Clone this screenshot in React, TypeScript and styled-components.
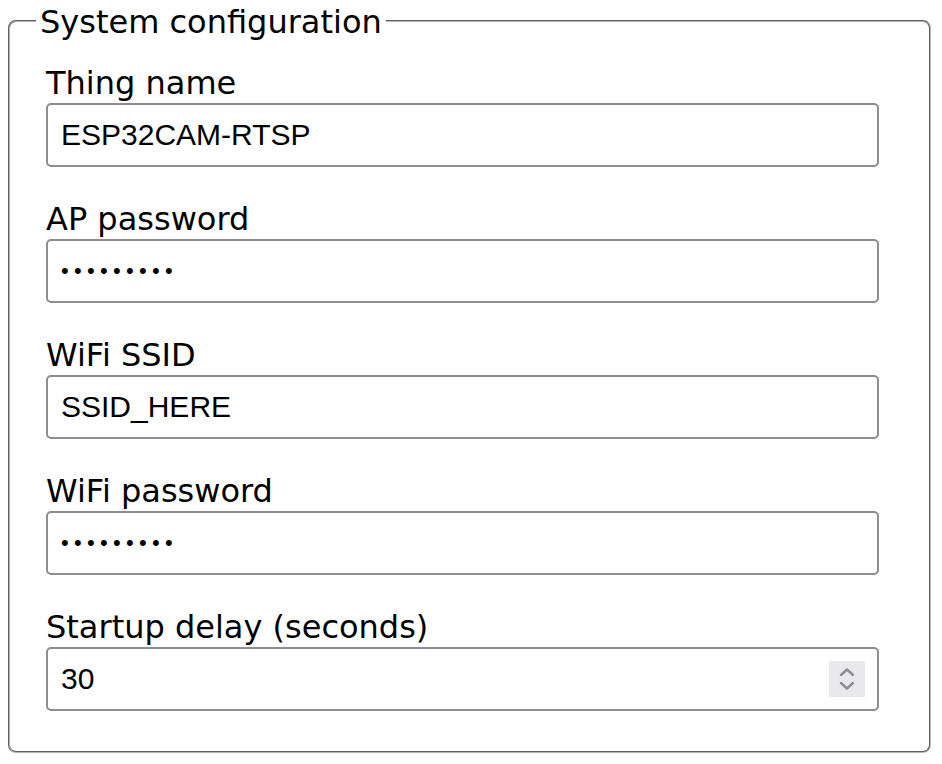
import styled, { createGlobalStyle } from 'styled-components';

const GlobalStyle = createGlobalStyle`
  html, body {
    margin: 0;
    background: #fff;
  }
  body {
    font-family: "DejaVu Sans", Verdana, sans-serif;
    color: #000;
  }
`;

const Page = styled.div`
  padding: 1px 11px 0 8px;
`;

const Fieldset = styled.fieldset`
  margin: 0;
  padding: 24px 50px 40px 36px;
  border: 2px groove #b4b4b4;
  border-radius: 8px;
  min-width: 0;
`;

const Legend = styled.legend`
  font-size: 32px;
  line-height: 37px;
  padding: 3px 4px 0;
  margin-left: -10px;
`;

const Fields = styled.div`
  display: grid;
  row-gap: 34px;
`;

const Field = styled.div`
  display: flex;
  flex-direction: column;
  gap: 1px;
`;

const Label = styled.label`
  font-size: 32px;
  line-height: 37px;
`;

const InputWrap = styled.div`
  position: relative;
`;

const Input = styled.input<{ $dots?: boolean }>`
  box-sizing: border-box;
  width: 100%;
  height: 64px;
  margin: 0;
  padding: 0 13px;
  border: 2px solid #8e8d94;
  border-radius: 5px;
  background: #fff;
  color: #000;
  font-family: "Liberation Sans", Arial, sans-serif;
  font-size: ${({ $dots }) => ($dots ? '22px' : '30px')};
  letter-spacing: ${({ $dots }) => ($dots ? '5.3px' : 'normal')};
  outline: none;
  -moz-appearance: textfield;

  &::-webkit-inner-spin-button,
  &::-webkit-outer-spin-button {
    -webkit-appearance: none;
    margin: 0;
  }
`;

const Spinner = styled.span`
  position: absolute;
  top: 14px;
  right: 14px;
  width: 36px;
  height: 36px;
  background: #e8e8ed;
  display: flex;
  align-items: center;
  justify-content: center;
  pointer-events: none;
`;

function Chevrons() {
  return (
    <svg width="18" height="26" viewBox="0 0 18 26" fill="none">
      <path d="M3 9 L9 3.5 L15 9" stroke="#8e8d93" strokeWidth="2.4" strokeLinecap="round" strokeLinejoin="round" />
      <path d="M3 17 L9 22.5 L15 17" stroke="#8e8d93" strokeWidth="2.4" strokeLinecap="round" strokeLinejoin="round" />
    </svg>
  );
}

const fields = [
  { id: 'thingName', label: 'Thing name', type: 'text', value: 'ESP32CAM-RTSP' },
  { id: 'apPassword', label: 'AP password', type: 'password', value: '123456789' },
  { id: 'wifiSsid', label: 'WiFi SSID', type: 'text', value: 'SSID_HERE' },
  { id: 'wifiPassword', label: 'WiFi password', type: 'password', value: '123456789' },
  { id: 'startupDelay', label: 'Startup delay (seconds)', type: 'number', value: '30' },
];

export default function App() {
  return (
    <>
      <GlobalStyle />
      <Page>
        <Fieldset>
          <Legend>System configuration</Legend>
          <Fields>
            {fields.map((f) => (
              <Field key={f.id}>
                <Label htmlFor={f.id}>{f.label}</Label>
                <InputWrap>
                  <Input
                    id={f.id}
                    type={f.type}
                    defaultValue={f.value}
                    $dots={f.type === 'password'}
                  />
                  {f.type === 'number' && (
                    <Spinner>
                      <Chevrons />
                    </Spinner>
                  )}
                </InputWrap>
              </Field>
            ))}
          </Fields>
        </Fieldset>
      </Page>
    </>
  );
}
